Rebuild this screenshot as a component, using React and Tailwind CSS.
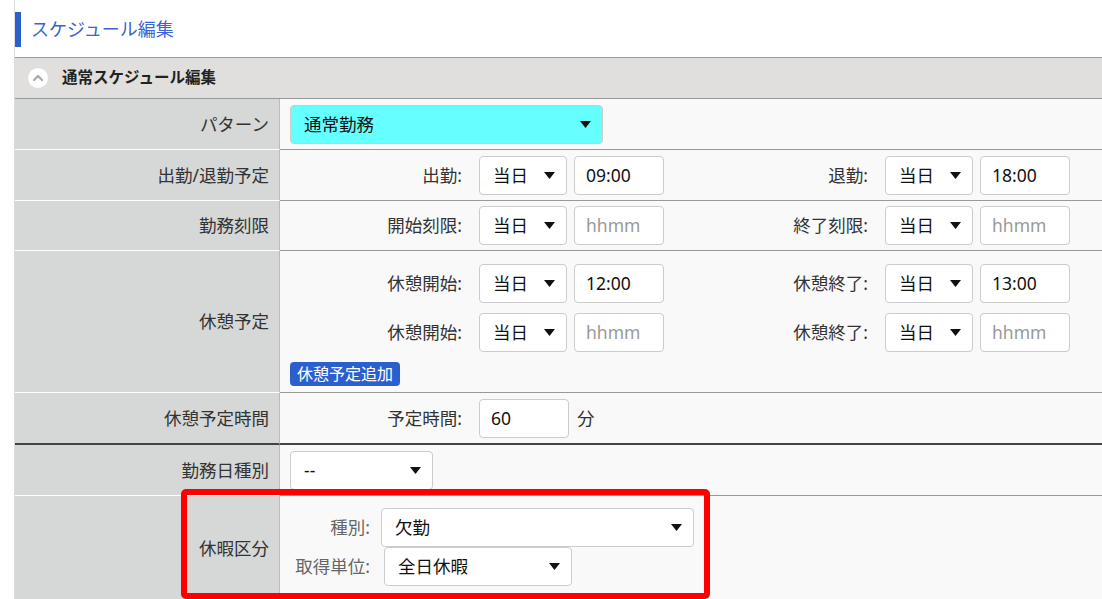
import React from 'react'

const font = { fontFamily: '"Noto Sans", "Noto Sans CJK JP", sans-serif' }

function Caret() {
  return (
    <svg width="11" height="7" viewBox="0 0 11 7" className="shrink-0">
      <path d="M0 0 L11 0 L5.5 7 Z" fill="#111" />
    </svg>
  )
}

function Select({ value, className = '', bg = 'bg-white' }) {
  return (
    <div className={`h-[39px] flex items-center justify-between pl-[13px] pr-[11px] border border-[#ccc] rounded-[4px] text-[17.5px] text-[#111] ${bg} ${className}`}>
      <span>{value}</span>
      <Caret />
    </div>
  )
}

function Input({ value, placeholder, className = '' }) {
  return (
    <div className={`h-[39px] w-[90px] flex items-center pl-[11px] border border-[#ccc] rounded-[4px] bg-white text-[17.5px] ${className}`}>
      {value ? <span className="text-[#111]">{value}</span> : <span className="text-[#999]">{placeholder}</span>}
    </div>
  )
}

function TimeGroup({ label, value, placeholder }) {
  return (
    <div className="w-[406px] flex items-center">
      <div className="w-[172px] text-right text-[17.5px] text-[#333]">{label}</div>
      <Select value="当日" className="ml-[17px] w-[88px]" />
      <Input value={value} placeholder={placeholder} className="ml-[7px]" />
    </div>
  )
}

function Row({ label, children, h = 'h-[51px]', thick = false, last = false, valueClass = 'flex items-center' }) {
  const lb = last ? '' : thick ? 'border-b-2 border-b-[#444]' : 'border-b border-b-white'
  const vb = last ? '' : thick ? 'border-b-2 border-b-[#444]' : 'border-b border-b-[#999]'
  return (
    <div className="flex">
      <div className={`w-[265px] shrink-0 bg-[#d6d7d7] border-r border-r-[#bbb] flex items-center justify-end pr-[10px] text-[17.5px] text-[#333] ${h} ${lb}`}>
        {label}
      </div>
      <div className={`flex-1 bg-[#f9f9f9] pl-[10px] ${h} ${vb} ${valueClass}`}>{children}</div>
    </div>
  )
}

export default function App() {
  return (
    <div className="w-[1102px] h-[599px] overflow-hidden bg-white relative leading-[1.4]" style={font}>
      <div className="ml-[14px] border-l border-l-[#ddd] min-h-[599px]">
        {/* Page title */}
        <div className="h-[57px] pt-[12px]">
          <div className="flex items-center h-[35px] border-l-[6px] border-l-[#2b5fce] pl-[10px]">
            <h1 className="text-[18px] text-[#3b63d6]">スケジュール編集</h1>
          </div>
        </div>

        {/* Section header */}
        <div className="h-[42px] bg-[#e1dfde] border-t border-b border-[#999] flex items-center pl-[12px] gap-[13px]">
          <div className="w-[22px] h-[22px] rounded-full bg-white border border-[#ddd] flex items-center justify-center">
            <svg width="12" height="8" viewBox="0 0 12 8">
              <path d="M2 6 L6 2 L10 6" fill="none" stroke="#aaa" strokeWidth="2.2" strokeLinecap="round" strokeLinejoin="round" />
            </svg>
          </div>
          <span className="text-[15.5px] font-bold text-[#222]">通常スケジュール編集</span>
        </div>

        <Row label="パターン">
          <Select value="通常勤務" bg="bg-[#66ffff]" className="w-[313px]" />
        </Row>

        <Row label="出勤/退勤予定">
          <TimeGroup label="出勤:" value="09:00" />
          <TimeGroup label="退勤:" value="18:00" />
        </Row>

        <Row label="勤務刻限" h="h-[50px]">
          <TimeGroup label="開始刻限:" placeholder="hhmm" />
          <TimeGroup label="終了刻限:" placeholder="hhmm" />
        </Row>

        <Row label="休憩予定" h="h-[142px]" valueClass="flex flex-col justify-start gap-[10px] pt-[13px]">
          <div className="flex">
            <TimeGroup label="休憩開始:" value="12:00" />
            <TimeGroup label="休憩終了:" value="13:00" />
          </div>
          <div className="flex">
            <TimeGroup label="休憩開始:" placeholder="hhmm" />
            <TimeGroup label="休憩終了:" placeholder="hhmm" />
          </div>
          <div>
            <button className="h-[24px] px-[7px] rounded-[4px] bg-[#2b5fce] text-white text-[16px] leading-[24px]">休憩予定追加</button>
          </div>
        </Row>

        <Row label="休憩予定時間" h="h-[52px]" thick>
          <div className="w-[172px] text-right text-[17.5px] text-[#333]">予定時間:</div>
          <Input value="60" className="ml-[17px]" />
          <span className="ml-[8px] text-[17.5px] text-[#333]">分</span>
        </Row>

        <Row label="勤務日種別">
          <Select value="--" className="w-[143px]" />
        </Row>

        <Row label="休暇区分" h="h-[104px]" last valueClass="flex flex-col justify-start pt-[12px]">
          <div className="flex items-center">
            <div className="w-[80px] text-right text-[17.5px] text-[#666]">種別:</div>
            <Select value="欠勤" className="ml-[11px] w-[313px]" />
          </div>
          <div className="flex items-center">
            <div className="w-[80px] text-right text-[17.5px] text-[#666]">取得単位:</div>
            <Select value="全日休暇" className="ml-[14px] w-[188px]" />
          </div>
        </Row>
      </div>

      {/* Annotation highlight */}
      <div className="absolute left-[181px] top-[489px] w-[529px] h-[110px] border-[6px] border-[#ff0000] rounded-[5px]" />
    </div>
  )
}
